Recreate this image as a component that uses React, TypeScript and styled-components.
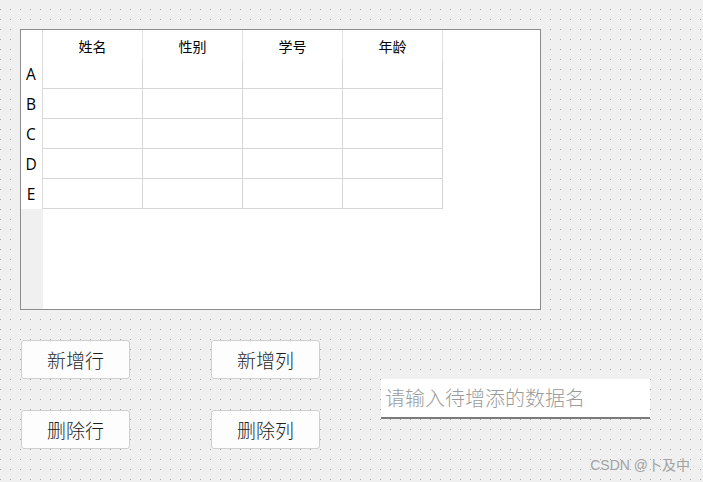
import React from "react";
import styled, { createGlobalStyle } from "styled-components";

const GlobalStyle = createGlobalStyle`
  html, body {
    margin: 0;
    padding: 0;
    width: 100%;
    height: 100%;
  }
  body {
    background-color: #f0f0f0;
    background-image:
      linear-gradient(to bottom, #f0f0f0 9px, transparent 9px, transparent 10px),
      linear-gradient(to right, #a3a3a3 1px, #f0f0f0 1px);
    background-size: 10px 10px, 10px 10px;
    background-position: 0 0, 0 0;
    font-family: "Noto Sans", "Noto Sans CJK SC", sans-serif;
  }
  #root {
    width: 703px;
    height: 482px;
  }
`;

const Page = styled.div`
  position: relative;
  width: 703px;
  height: 482px;
  box-sizing: border-box;
  padding: 29px 0 0 20px;
  display: flex;
  flex-direction: column;
`;

const TableFrame = styled.div`
  width: 521px;
  height: 281px;
  box-sizing: border-box;
  border: 1px solid #8c8c8f;
  background: #ffffff;
  display: grid;
  grid-template-columns: 22px repeat(4, 100px) 1fr;
  grid-template-rows: 29px repeat(5, 30px) 1fr;
`;

const Corner = styled.div`
  box-sizing: border-box;
  border-right: 1px solid #dadada;
  background: #ffffff;
`;

const HeaderCell = styled.div`
  box-sizing: border-box;
  border-right: 1px solid #e2e2e2;
  background: #ffffff;
  display: flex;
  align-items: center;
  justify-content: center;
  padding-top: 2px;
  font-family: "Noto Sans CJK SC", sans-serif;
  font-size: 14px;
  color: #000;
`;

const RowHeader = styled.div`
  box-sizing: border-box;
  border-right: 1px solid #dadada;
  background: #ffffff;
  display: flex;
  align-items: center;
  justify-content: center;
  padding: 0 1px 0 0;
  font-family: "Open Sans", "Noto Sans", sans-serif;
  font-size: 15.5px;
  color: #000;
`;

const DataCell = styled.div`
  box-sizing: border-box;
  border-right: 1px solid #d6d6d6;
  border-bottom: 1px solid #d6d6d6;
  background: #ffffff;
`;

const Blank = styled.div<{ $gray?: boolean; $col: string; $row: string }>`
  grid-column: ${(p) => p.$col};
  grid-row: ${(p) => p.$row};
  background: ${(p) => (p.$gray ? "#f0f0f0" : "#ffffff")};
`;

const Controls = styled.div`
  display: flex;
  align-items: flex-start;
  margin-top: 30px;
  padding-left: 1px;
`;

const ButtonGrid = styled.div`
  display: grid;
  grid-template-columns: 109px 109px;
  grid-template-rows: 39px 39px;
  column-gap: 81px;
  row-gap: 31px;
`;

const ActionButton = styled.button`
  box-sizing: border-box;
  width: 109px;
  height: 39px;
  margin: 0;
  padding: 0 0 1px 0;
  border: 1px solid #cfcfcf;
  border-radius: 3px;
  background: #fdfdfd;
  font-family: "Noto Sans CJK SC", sans-serif;
  font-size: 19px;
  font-weight: 300;
  color: #1e1e1e;
  cursor: pointer;
`;

const NameInput = styled.input`
  box-sizing: border-box;
  width: 269px;
  height: 40px;
  margin: 39px 0 0 61px;
  padding: 0 4px 2px 4px;
  border: none;
  border-bottom: 2px solid #7a7a7a;
  background: #ffffff;
  font-family: "Noto Sans CJK SC", sans-serif;
  font-size: 20px;
  font-weight: 300;
  color: #000;
  outline: none;
  &::placeholder {
    color: #9c9c9c;
  }
`;

const Watermark = styled.div`
  position: absolute;
  right: 13px;
  bottom: 8px;
  font-family: "Liberation Sans", "Noto Sans CJK SC", sans-serif;
  font-size: 14px;
  color: #a2a2a2;
`;

const columns = ["姓名", "性别", "学号", "年龄"];
const rows = ["A", "B", "C", "D", "E"];

export default function App() {
  return (
    <>
      <GlobalStyle />
      <Page>
        <TableFrame>
          <Corner />
          {columns.map((c) => (
            <HeaderCell key={c}>{c}</HeaderCell>
          ))}
          <Blank $col="6" $row="1 / 8" />
          {rows.map((r) => (
            <React.Fragment key={r}>
              <RowHeader>{r}</RowHeader>
              {columns.map((c) => (
                <DataCell key={c} />
              ))}
            </React.Fragment>
          ))}
          <Blank $gray $col="1" $row="7" />
          <Blank $col="2 / 6" $row="7" />
        </TableFrame>
        <Controls>
          <ButtonGrid>
            <ActionButton>新增行</ActionButton>
            <ActionButton>新增列</ActionButton>
            <ActionButton>删除行</ActionButton>
            <ActionButton>删除列</ActionButton>
          </ButtonGrid>
          <NameInput placeholder="请输入待增添的数据名" />
        </Controls>
        <Watermark>CSDN @卜及中</Watermark>
      </Page>
    </>
  );
}
